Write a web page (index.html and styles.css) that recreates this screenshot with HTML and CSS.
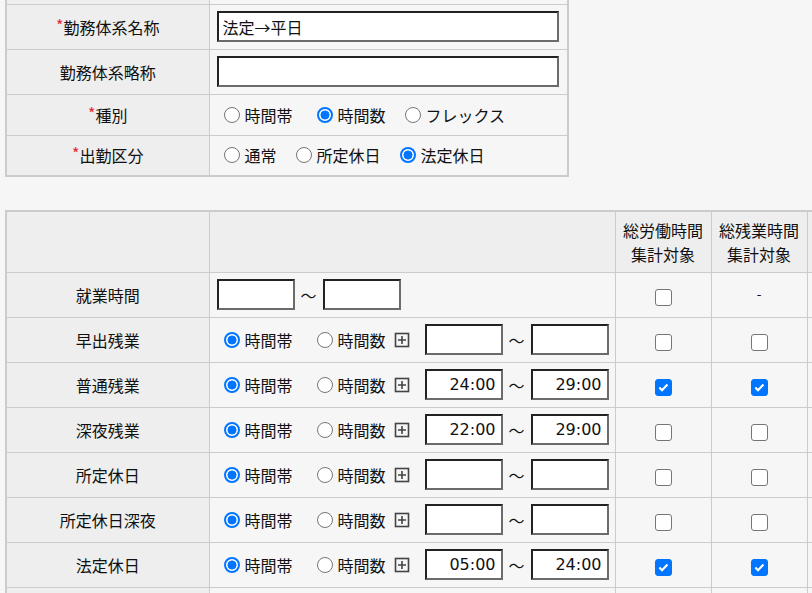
FILE: index.html
```html
<!DOCTYPE html>
<html lang="ja">
<head>
<meta charset="utf-8">
<title>勤務体系</title>
<link rel="stylesheet" href="styles.css">
</head>
<body>
<table class="grid basic">
  <colgroup><col class="c-label"><col class="c-value"></colgroup>
  <tr class="cut"><th></th><td></td></tr>
  <tr class="r-input">
    <th><span class="req">*</span>勤務体系名称</th>
    <td><input type="text" class="txt-wide" value="法定→平日"></td>
  </tr>
  <tr class="r-input">
    <th>勤務体系略称</th>
    <td><input type="text" class="txt-wide" value=""></td>
  </tr>
  <tr class="r-radio">
    <th><span class="req">*</span>種別</th>
    <td>
      <div class="opts">
        <label class="opt opt-band"><input type="radio" name="kind">時間帯</label>
        <label class="opt"><input type="radio" name="kind" checked>時間数</label>
        <label class="opt"><input type="radio" name="kind">フレックス</label>
      </div>
    </td>
  </tr>
  <tr class="r-radio">
    <th><span class="req">*</span>出勤区分</th>
    <td>
      <div class="opts">
        <label class="opt"><input type="radio" name="att">通常</label>
        <label class="opt"><input type="radio" name="att">所定休日</label>
        <label class="opt"><input type="radio" name="att" checked>法定休日</label>
      </div>
    </td>
  </tr>
</table>

<table class="grid detail">
  <colgroup><col class="c-label"><col class="c-time"><col class="c-chk"><col class="c-chk"><col class="c-rest"></colgroup>
  <tr class="head">
    <th></th>
    <th></th>
    <th class="hd">総労働時間<br>集計対象</th>
    <th class="hd">総残業時間<br>集計対象</th>
    <th></th>
  </tr>
  <tr class="row">
    <th>就業時間</th>
    <td>
      <div class="range">
        <input type="text" class="txt-time" value="">
        <span class="tilde">～</span>
        <input type="text" class="txt-time" value="">
      </div>
    </td>
    <td class="chk"><input type="checkbox"></td>
    <td class="chk dash">-</td>
    <td></td>
  </tr>
  <tr class="row">
    <th>早出残業</th>
    <td>
      <div class="line">
        <label class="opt opt-band"><input type="radio" name="r1" checked>時間帯</label>
        <label class="opt"><input type="radio" name="r1">時間数</label>
        <span class="plus"><svg viewBox="0 0 16 16" width="16" height="16"><rect x="1.5" y="1.5" width="13" height="13" fill="none" stroke="#444" stroke-width="1.6"/><path d="M4 8h8M8 4v8" stroke="#444" stroke-width="1.6"/></svg></span>
        <div class="range">
          <input type="text" class="txt-time" value="">
          <span class="tilde">～</span>
          <input type="text" class="txt-time" value="">
        </div>
      </div>
    </td>
    <td class="chk"><input type="checkbox"></td>
    <td class="chk"><input type="checkbox"></td>
    <td></td>
  </tr>
  <tr class="row">
    <th>普通残業</th>
    <td>
      <div class="line">
        <label class="opt opt-band"><input type="radio" name="r2" checked>時間帯</label>
        <label class="opt"><input type="radio" name="r2">時間数</label>
        <span class="plus"><svg viewBox="0 0 16 16" width="16" height="16"><rect x="1.5" y="1.5" width="13" height="13" fill="none" stroke="#444" stroke-width="1.6"/><path d="M4 8h8M8 4v8" stroke="#444" stroke-width="1.6"/></svg></span>
        <div class="range">
          <input type="text" class="txt-time" value="24:00">
          <span class="tilde">～</span>
          <input type="text" class="txt-time" value="29:00">
        </div>
      </div>
    </td>
    <td class="chk"><input type="checkbox" checked></td>
    <td class="chk"><input type="checkbox" checked></td>
    <td></td>
  </tr>
  <tr class="row">
    <th>深夜残業</th>
    <td>
      <div class="line">
        <label class="opt opt-band"><input type="radio" name="r3" checked>時間帯</label>
        <label class="opt"><input type="radio" name="r3">時間数</label>
        <span class="plus"><svg viewBox="0 0 16 16" width="16" height="16"><rect x="1.5" y="1.5" width="13" height="13" fill="none" stroke="#444" stroke-width="1.6"/><path d="M4 8h8M8 4v8" stroke="#444" stroke-width="1.6"/></svg></span>
        <div class="range">
          <input type="text" class="txt-time" value="22:00">
          <span class="tilde">～</span>
          <input type="text" class="txt-time" value="29:00">
        </div>
      </div>
    </td>
    <td class="chk"><input type="checkbox"></td>
    <td class="chk"><input type="checkbox"></td>
    <td></td>
  </tr>
  <tr class="row">
    <th>所定休日</th>
    <td>
      <div class="line">
        <label class="opt opt-band"><input type="radio" name="r4" checked>時間帯</label>
        <label class="opt"><input type="radio" name="r4">時間数</label>
        <span class="plus"><svg viewBox="0 0 16 16" width="16" height="16"><rect x="1.5" y="1.5" width="13" height="13" fill="none" stroke="#444" stroke-width="1.6"/><path d="M4 8h8M8 4v8" stroke="#444" stroke-width="1.6"/></svg></span>
        <div class="range">
          <input type="text" class="txt-time" value="">
          <span class="tilde">～</span>
          <input type="text" class="txt-time" value="">
        </div>
      </div>
    </td>
    <td class="chk"><input type="checkbox"></td>
    <td class="chk"><input type="checkbox"></td>
    <td></td>
  </tr>
  <tr class="row">
    <th>所定休日深夜</th>
    <td>
      <div class="line">
        <label class="opt opt-band"><input type="radio" name="r5" checked>時間帯</label>
        <label class="opt"><input type="radio" name="r5">時間数</label>
        <span class="plus"><svg viewBox="0 0 16 16" width="16" height="16"><rect x="1.5" y="1.5" width="13" height="13" fill="none" stroke="#444" stroke-width="1.6"/><path d="M4 8h8M8 4v8" stroke="#444" stroke-width="1.6"/></svg></span>
        <div class="range">
          <input type="text" class="txt-time" value="">
          <span class="tilde">～</span>
          <input type="text" class="txt-time" value="">
        </div>
      </div>
    </td>
    <td class="chk"><input type="checkbox"></td>
    <td class="chk"><input type="checkbox"></td>
    <td></td>
  </tr>
  <tr class="row">
    <th>法定休日</th>
    <td>
      <div class="line">
        <label class="opt opt-band"><input type="radio" name="r6" checked>時間帯</label>
        <label class="opt"><input type="radio" name="r6">時間数</label>
        <span class="plus"><svg viewBox="0 0 16 16" width="16" height="16"><rect x="1.5" y="1.5" width="13" height="13" fill="none" stroke="#444" stroke-width="1.6"/><path d="M4 8h8M8 4v8" stroke="#444" stroke-width="1.6"/></svg></span>
        <div class="range">
          <input type="text" class="txt-time" value="05:00">
          <span class="tilde">～</span>
          <input type="text" class="txt-time" value="24:00">
        </div>
      </div>
    </td>
    <td class="chk"><input type="checkbox" checked></td>
    <td class="chk"><input type="checkbox" checked></td>
    <td></td>
  </tr>
  <tr class="row tail">
    <th></th>
    <td></td>
    <td class="chk"></td>
    <td class="chk"></td>
    <td></td>
  </tr>
</table>
</body>
</html>
```
FILE: styles.css
```css
html, body {
  margin: 0;
  padding: 0;
  overflow: hidden;
  background: #f6f6f6;
}
body {
  padding: 0 0 0 5px;
  font-family: "Noto Sans CJK JP", "Noto Sans", sans-serif;
  font-size: 16px;
  color: #111;
}
.grid {
  border-collapse: collapse;
  table-layout: fixed;
  border: 2px solid #cccccc;
}
.grid th, .grid td {
  border: 1px solid #cccccc;
  padding: 0;
  vertical-align: middle;
  white-space: nowrap;
}
.grid th {
  background: #eeeeee;
  font-weight: normal;
  text-align: center;
}
.grid td {
  background: #f6f6f6;
}
.basic {
  width: 564px;
  border-top: none;
}
.basic .c-label { width: 203px; }
.basic td { padding: 0 7px; }
.cut { height: 4px; }
.cut th, .cut td { border-top: none; }
.r-input { height: 45px; }
.r-radio { height: 41px; }
.req {
  color: #e8262b;
  font-size: 16px;
  position: relative;
  top: -2px;
}
input[type="text"] {
  box-sizing: border-box;
  height: 31px;
  margin: 0;
  font-family: "Noto Sans CJK JP", "Noto Sans", sans-serif;
  font-size: 16px;
  color: #111;
  background: #fff;
  border-style: solid;
  border-width: 2px;
  border-color: #222 #6b6b6b #6b6b6b #222;
  padding: 0 4px;
  outline: none;
  flex-shrink: 0;
}
.txt-wide {
  display: block;
  width: 342px;
}
.txt-time {
  width: 78px;
  text-align: right;
  font-family: "DejaVu Sans", "Noto Sans CJK JP", sans-serif !important;
  padding-right: 5px !important;
}
.opts, .line {
  display: flex;
  align-items: center;
}
.opt {
  display: inline-flex;
  align-items: center;
  margin-right: 12px;
  white-space: nowrap;
  flex-shrink: 0;
}
.opt-band { margin-right: 17px; }
input[type="radio"] {
  -webkit-appearance: none;
  appearance: none;
  box-sizing: border-box;
  width: 16px;
  height: 16px;
  margin: 0 5px 0 7px;
  flex-shrink: 0;
  border-radius: 50%;
  border: 1px solid #767676;
  background: #fff;
}
input[type="radio"]:checked {
  border: 2px solid #0075ff;
  background: radial-gradient(circle at center, #0075ff 0, #0075ff 4.2px, #ffffff 4.8px);
}
.detail {
  width: 900px;
  margin-top: 33px;
}
.detail .c-label { width: 203px; }
.detail .c-time { width: 406px; }
.detail .c-chk { width: 96px; }
.detail td:nth-child(2) { padding: 0 7px; }
.head { height: 61px; }
.head th { line-height: 24px; }
.row { height: 45px; }
.chk {
  text-align: center;
}
.dash {
  font-family: "DejaVu Sans", sans-serif;
  font-size: 13px;
}
input[type="checkbox"] {
  -webkit-appearance: none;
  appearance: none;
  box-sizing: border-box;
  width: 17px;
  height: 17px;
  margin: 0;
  vertical-align: middle;
  border: 1px solid #767676;
  border-radius: 3px;
  background: #fff;
}
input[type="checkbox"]:checked {
  border-color: #0075ff;
  background-color: #0075ff;
  background-image: url("data:image/svg+xml,%3Csvg xmlns='http://www.w3.org/2000/svg' viewBox='0 0 17 17'%3E%3Cpath d='M3.8 8.6l3 3 6.2-6.6' fill='none' stroke='%23fff' stroke-width='2.4'/%3E%3C/svg%3E");
  background-size: 100% 100%;
}
.range {
  display: flex;
  align-items: center;
  flex-shrink: 0;
}
.tilde {
  width: 16px;
  margin: 0 6px;
  text-align: center;
  line-height: 1;
}
.line .opt:nth-child(2) { margin-right: 8px; }
.plus {
  display: inline-flex;
  width: 16px;
  height: 16px;
  margin-right: 15px;
  flex-shrink: 0;
}
```
